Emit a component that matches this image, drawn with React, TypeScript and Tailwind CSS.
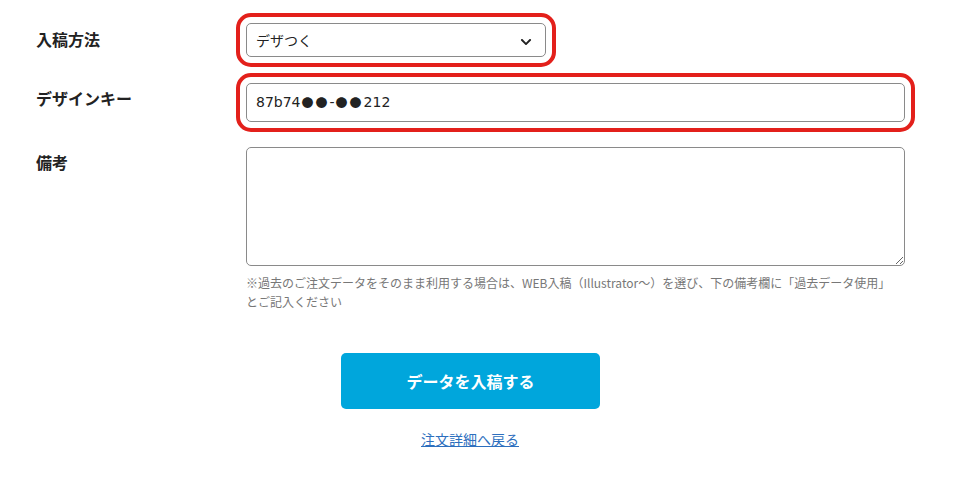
import { FaChevronDown } from "react-icons/fa";

const font = { fontFamily: '"Noto Sans CJK JP", "Noto Sans", sans-serif' };

export default function App() {
  return (
    <div className="w-[958px] h-[478px] bg-white text-[#222]" style={font}>
      <div className="pt-[23px]">
        <div className="flex items-start">
          <div className="w-[246px] pl-[36px] pt-[5px] text-[16px] leading-[22px] font-bold">
            入稿方法
          </div>
          <div className="relative w-[300px] h-[34px] rounded-[5px] border border-[#8a8a8a] outline-[4px] outline-solid outline-[#e3201b] outline-offset-[6px] flex items-center pl-[9px] text-[14px]">
            デザつく
            <FaChevronDown className="absolute right-[13px] top-[12px] w-[12px] h-[12px] text-[#222]" />
          </div>
        </div>

        <div className="flex items-start mt-[26px]">
          <div className="w-[246px] pl-[36px] pt-[4px] text-[16px] leading-[22px] font-bold">
            デザインキー
          </div>
          <div className="w-[659px] h-[39px] rounded-[5px] border border-[#8a8a8a] outline-[4px] outline-solid outline-[#e3201b] outline-offset-[6px] flex items-center pl-[9px] text-[14px]">
            <span style={{ fontFamily: '"DejaVu Sans", sans-serif' }}>87b74</span>
            <span className="text-[12px] tracking-[2px] ml-[1px]">●●</span>
            <span style={{ fontFamily: '"DejaVu Sans", sans-serif' }}>-</span>
            <span className="text-[12px] tracking-[2px] ml-[1px]">●●</span>
            <span style={{ fontFamily: '"DejaVu Sans", sans-serif' }}>212</span>
          </div>
        </div>

        <div className="flex items-start mt-[25px]">
          <div className="w-[246px] pl-[36px] pt-[4px] text-[16px] leading-[22px] font-bold">
            備考
          </div>
          <div className="w-[659px]">
            <textarea
              className="block w-[659px] h-[119px] rounded-[5px] border border-[#8a8a8a] resize-y"
              defaultValue=""
            />
            <p className="mt-[7px] text-[12px] leading-[19px] text-[#777]">
              ※過去のご注文データをそのまま利用する場合は、WEB入稿（Illustrator～）を選び、下の備考欄に「過去データ使用」
              <br />
              とご記入ください
            </p>
          </div>
        </div>

        <div className="flex flex-col items-center">
          <button className="mt-[42px] ml-[-17px] w-[259px] h-[56px] rounded-[5px] bg-[#00a6dc] text-white text-[16px] font-bold">
            データを入稿する
          </button>
          <a
            href="#"
            className="mt-[20px] ml-[-18px] text-[14px] leading-[20px] text-[#2d6fbe] underline"
          >
            注文詳細へ戻る
          </a>
        </div>
      </div>
    </div>
  );
}
